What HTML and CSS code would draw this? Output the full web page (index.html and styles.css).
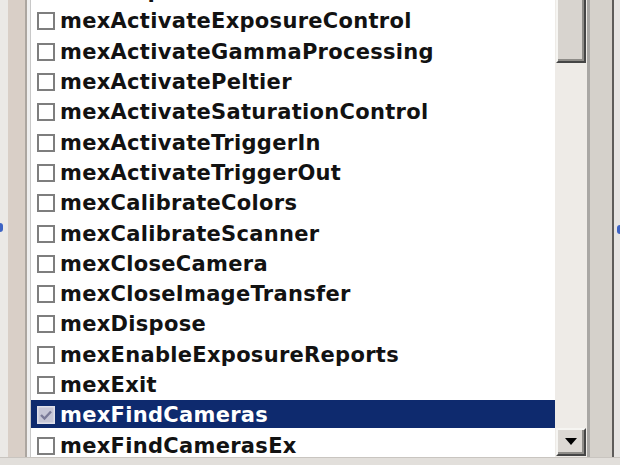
FILE: index.html
```html
<!DOCTYPE html>
<html>
<head>
<meta charset="utf-8">
<link rel="stylesheet" href="styles.css">
</head>
<body>
<div class="window">
  <div class="frame-left"></div>
  <div class="list">
    <div class="rows">
      <div class="row"><span class="box"></span><span class="label">mexAcquire</span></div>
      <div class="row"><span class="box"></span><span class="label">mexActivateExposureControl</span></div>
      <div class="row"><span class="box"></span><span class="label">mexActivateGammaProcessing</span></div>
      <div class="row"><span class="box"></span><span class="label">mexActivatePeltier</span></div>
      <div class="row"><span class="box"></span><span class="label">mexActivateSaturationControl</span></div>
      <div class="row"><span class="box"></span><span class="label">mexActivateTriggerIn</span></div>
      <div class="row"><span class="box"></span><span class="label">mexActivateTriggerOut</span></div>
      <div class="row"><span class="box"></span><span class="label">mexCalibrateColors</span></div>
      <div class="row"><span class="box"></span><span class="label">mexCalibrateScanner</span></div>
      <div class="row"><span class="box"></span><span class="label">mexCloseCamera</span></div>
      <div class="row"><span class="box"></span><span class="label">mexCloseImageTransfer</span></div>
      <div class="row"><span class="box"></span><span class="label">mexDispose</span></div>
      <div class="row"><span class="box"></span><span class="label">mexEnableExposureReports</span></div>
      <div class="row"><span class="box"></span><span class="label">mexExit</span></div>
      <div class="row selected"><span class="box checked"><svg viewBox="0 0 18 18" width="18" height="18"><path d="M4 9 L7.5 12.5 L14 5.5" fill="none" stroke="#7a7a98" stroke-width="2.4"/></svg></span><span class="label">mexFindCameras</span></div>
      <div class="row"><span class="box"></span><span class="label">mexFindCamerasEx</span></div>
    </div>
  </div>
  <div class="vscroll">
    <div class="thumb"></div>
    <div class="btn-down"><svg viewBox="0 0 12 8" width="12" height="8"><path d="M0 0 H12 L6 7 Z" fill="#000"/></svg></div>
  </div>
  <div class="frame-right"></div>
</div>
<div class="frame-bottom"></div>
<span class="handle handle-left"></span>
<span class="handle handle-right"></span>
</body>
</html>
```

FILE: styles.css
```css
html, body {
  margin: 0;
  padding: 0;
}
body {
  width: 620px;
  height: 465px;
  overflow: hidden;
  display: flex;
  flex-direction: column;
  background: #dedad6;
  position: relative;
  font-family: "DejaVu Sans", Verdana, sans-serif;
}
.window {
  display: flex;
  height: 457px;
  flex: none;
}
.frame-left {
  width: 31px;
  flex: none;
  background: linear-gradient(to right,
    #ebe9e6 0, #ebe9e6 8px,
    #d9cfc7 8px, #d9cfc7 25px,
    #aca6a0 25px, #aca6a0 27px,
    #efefef 27px, #efefef 30px,
    #c8c8c8 30px, #c8c8c8 31px);
}
.list {
  width: 524px;
  flex: none;
  min-width: 0;
  background: #fff;
  overflow: hidden;
}
.rows {
  margin-top: -24px;
}
.row {
  height: 30.3px;
  display: flex;
  align-items: center;
  padding-left: 2px;
}
.row .label {
  height: 28px;
  display: flex;
  align-items: center;
  flex: 1;
  font-weight: bold;
  font-size: 21px;
  letter-spacing: 0.3px;
  white-space: nowrap;
  color: #121212;
  padding-left: 5px;
}
.row .box {
  width: 14px;
  height: 14px;
  border: 2px solid #7e7e7e;
  background: #fff;
  margin-left: 4px;
  flex: none;
}
.row.selected {
  background: linear-gradient(#fff 0, #fff 0.5px, #0e2a6e 0.5px, #0e2a6e 28.5px, #fff 28.5px);
}
.row.selected .label {
  color: #fff;
}
.row.selected .box {
  background: #c6c6d6;
  width: 18px;
  height: 18px;
  border: none;
  box-shadow: inset 0 0 0 1.5px #e0e0ea;
}
.row.selected .box svg {
  display: block;
}
.vscroll {
  width: 35px;
  flex: none;
  background: #eeebe7;
  display: flex;
  flex-direction: column;
  padding-left: 1px;
  box-sizing: border-box;
  border-right: 3px solid #a9a7a4;
}
.thumb {
  width: 30px;
  height: 63px;
  box-sizing: border-box;
  background: #d8d4cf;
  border-left: 2px solid #f6f5f2;
  border-right: 2px solid #454545;
  border-bottom: 2px solid #454545;
  box-shadow: inset -2px -2px 0 #8e8c88;
}
.btn-down {
  margin-top: auto;
  width: 30px;
  height: 28px;
  box-sizing: border-box;
  background: #dcd8d3;
  border-top: 2px solid #f6f5f2;
  border-left: 2px solid #f6f5f2;
  border-right: 2px solid #454545;
  border-bottom: 2px solid #454545;
  box-shadow: inset -2px -2px 0 #8e8c88;
  display: flex;
  align-items: center;
  justify-content: center;
  margin-bottom: 1px;
}
.btn-down svg {
  display: block;
}
.frame-right {
  flex: 1;
  background: linear-gradient(to right,
    #d5d1cb 0, #d5d1cb 22px,
    #5e5c5a 22px, #5e5c5a 24px,
    #e6e4e2 24px);
}
.frame-bottom {
  flex: 1;
  background: linear-gradient(#c9c5c0 0, #c9c5c0 1px, #e2dfdb 1px);
}
.handle {
  position: absolute;
  width: 6px;
  height: 9px;
  background: #3d63c4;
  border-radius: 3px;
}
.handle-left {
  left: -3px;
  top: 223px;
}
.handle-right {
  right: -3px;
  top: 225px;
}
```
